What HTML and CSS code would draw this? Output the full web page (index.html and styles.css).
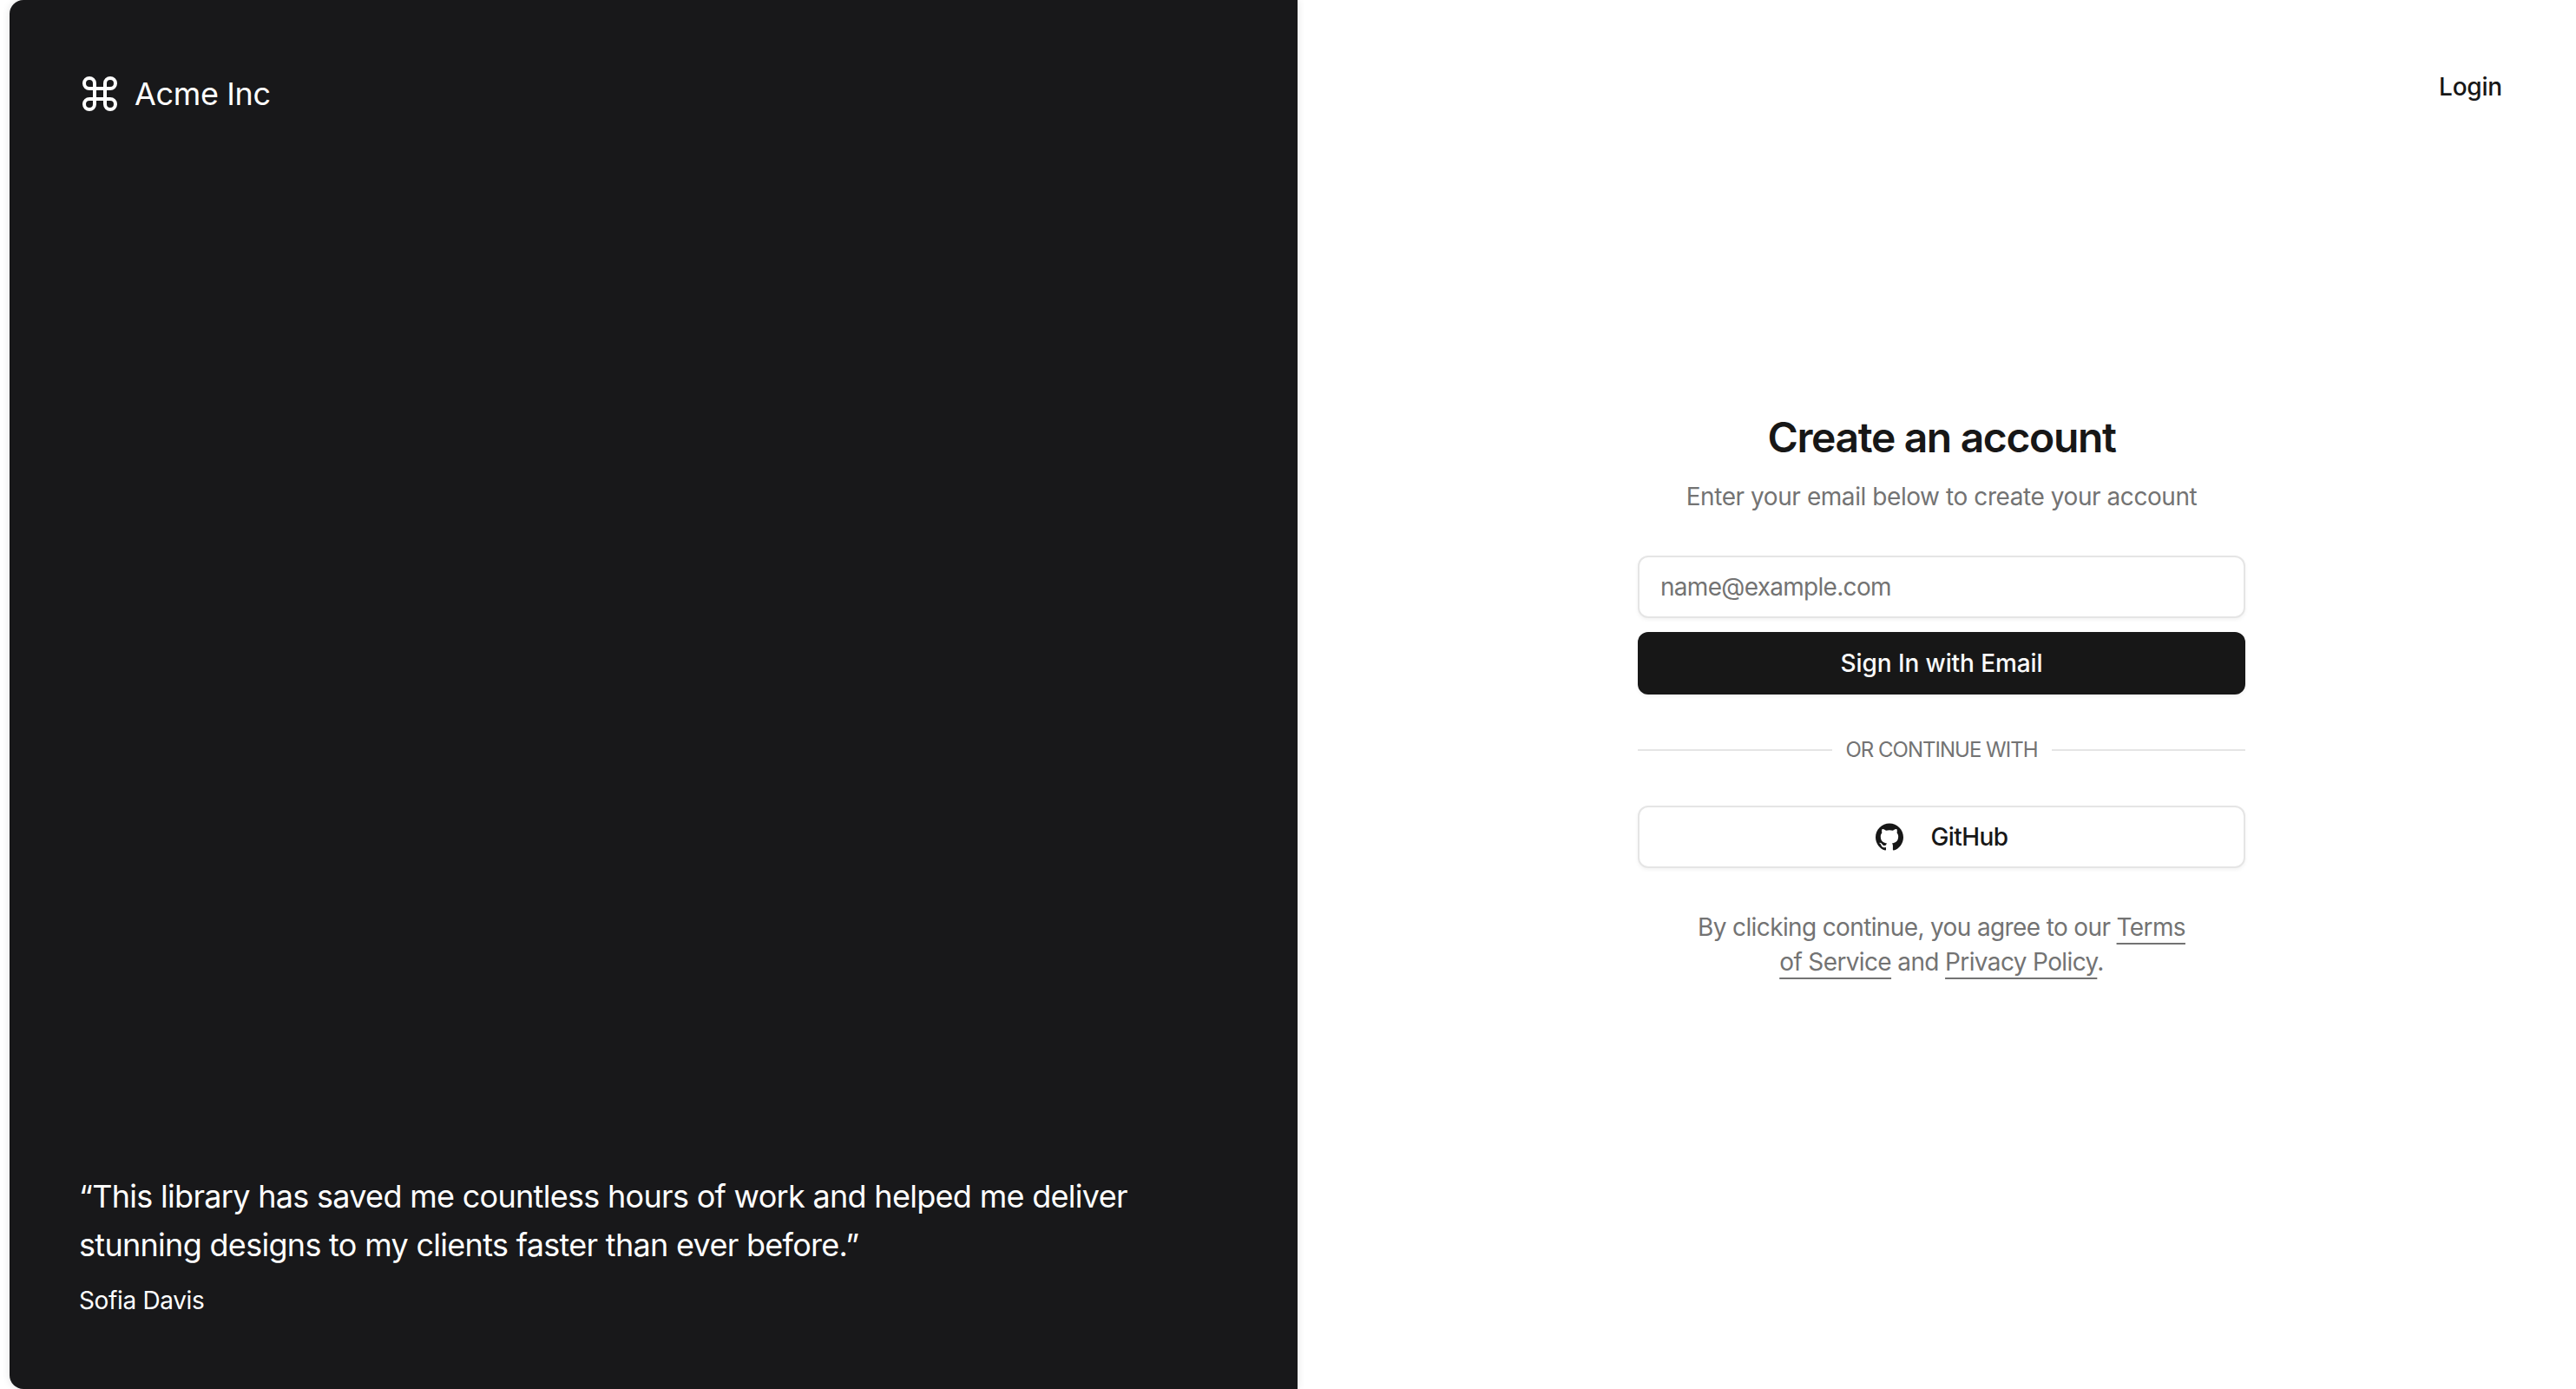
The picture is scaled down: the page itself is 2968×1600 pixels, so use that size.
FILE: index.html
```html
<!DOCTYPE html>
<html lang="en">
<head>
<meta charset="utf-8">
<title>Create an account</title>
<link rel="stylesheet" href="styles.css">
</head>
<body>
<div class="page">
  <aside class="panel">
    <div class="brand">
      <svg class="brand-icon" viewBox="0 0 24 24" fill="none" stroke="currentColor" stroke-width="2" stroke-linecap="round" stroke-linejoin="round"><path d="M15 6v12a3 3 0 1 0 3-3H6a3 3 0 1 0 3 3V6a3 3 0 1 0-3 3h12a3 3 0 1 0-3-3"/></svg>
      <span>Acme Inc</span>
    </div>
    <blockquote class="quote">
      <p class="quote-text">“This library has saved me countless hours of work and helped me deliver stunning designs to my clients faster than ever before.”</p>
      <footer class="quote-author">Sofia Davis</footer>
    </blockquote>
  </aside>
  <main class="content">
    <header class="topbar"><a class="login" href="#">Login</a></header>
    <section class="auth">
      <h1 class="title">Create an account</h1>
      <p class="subtitle">Enter your email below to create your account</p>
      <form class="form">
        <input class="input" type="email" placeholder="name@example.com">
        <button class="btn btn-primary" type="button">Sign In with Email</button>
      </form>
      <div class="divider"><span>OR CONTINUE WITH</span></div>
      <button class="btn btn-outline" type="button">
        <svg class="gh-icon" viewBox="0 0 24 24" fill="currentColor"><path d="M12 .297c-6.63 0-12 5.373-12 12 0 5.303 3.438 9.8 8.205 11.385.6.113.82-.258.82-.577 0-.285-.01-1.04-.015-2.04-3.338.724-4.042-1.61-4.042-1.61C4.422 18.07 3.633 17.7 3.633 17.7c-1.087-.744.084-.729.084-.729 1.205.084 1.838 1.236 1.838 1.236 1.07 1.835 2.809 1.305 3.495.998.108-.776.417-1.305.76-1.605-2.665-.3-5.466-1.332-5.466-5.93 0-1.31.465-2.38 1.235-3.22-.135-.303-.54-1.523.105-3.176 0 0 1.005-.322 3.3 1.23.96-.267 1.98-.399 3-.405 1.02.006 2.04.138 3 .405 2.28-1.552 3.285-1.23 3.285-1.23.645 1.653.24 2.873.12 3.176.765.84 1.23 1.91 1.23 3.22 0 4.61-2.805 5.625-5.475 5.92.42.36.81 1.096.81 2.22 0 1.606-.015 2.896-.015 3.286 0 .315.21.69.825.57C20.565 22.092 24 17.592 24 12.297c0-6.627-5.373-12-12-12"/></svg>
        <span>GitHub</span>
      </button>
      <p class="terms">By clicking continue, you agree to our <a href="#">Terms of Service</a> and <a href="#">Privacy Policy</a>.</p>
    </section>
  </main>
</div>
</body>
</html>
```
FILE: styles.css
```css
* { box-sizing: border-box; }
html, body { margin: 0; height: 100%; background: #fff; }
body { font-family: Inter, "Liberation Sans", sans-serif; color: #171717; overflow: hidden; }
.page { display: flex; height: 1600px; padding-left: 11px; }

.panel {
  width: 1484px;
  flex: none;
  background: #18181a;
  color: #fff;
  border-radius: 16px 0 0 16px;
  box-shadow: 0 0 10px rgba(0, 0, 0, .12);
  padding: 80px 80px 82px;
  display: flex;
  flex-direction: column;
  justify-content: space-between;
}
.brand { display: flex; align-items: center; gap: 16px; font-size: 36px; line-height: 56px; font-weight: 400; letter-spacing: -.35px; }
.brand-icon { width: 48px; height: 48px; flex: none; }
.quote { margin: 0; }
.quote-text { margin: 0 0 16px; font-size: 36px; line-height: 56px; font-weight: 400; letter-spacing: -.7px; }
.quote-author { font-size: 28px; line-height: 40px; font-weight: 400; letter-spacing: -.35px; }

.content { flex: 1; display: grid; padding-left: 11px; }
.topbar { grid-area: 1 / 1; display: flex; justify-content: flex-end; align-items: flex-start; padding: 80px 85px 0 0; }
.login { color: #171717; text-decoration: none; font-size: 28px; line-height: 40px; font-weight: 500; letter-spacing: -.2px; }

.auth { grid-area: 1 / 1; align-self: start; justify-self: center; width: 700px; margin-top: 472px; display: flex; flex-direction: column; align-items: stretch; text-align: center; }
.title { margin: 0; font-size: 48px; line-height: 64px; font-weight: 600; letter-spacing: -1.35px; color: #171717; }
.subtitle { margin: 16px 0 0; font-size: 28px; line-height: 40px; color: #737373; letter-spacing: -.43px; }
.form { display: flex; flex-direction: column; gap: 16px; margin-top: 48px; }
.input {
  display: block; width: 100%; height: 72px; padding: 0 24px;
  border: 2px solid #e5e5e5; border-radius: 12px; background: #fff;
  font: 400 28px Inter, sans-serif; letter-spacing: -.7px; color: #171717; outline: 0;
  box-shadow: 0 2px 4px rgba(0, 0, 0, .05);
}
.input::placeholder { color: #737373; opacity: 1; }
.btn {
  display: flex; align-items: center; justify-content: center; width: 100%; height: 72px;
  border-radius: 12px; font: 500 28px Inter, sans-serif; letter-spacing: -.1px; cursor: pointer;
}
.btn-primary { background: #171717; color: #fafafa; border: 0; box-shadow: 0 2px 4px rgba(0, 0, 0, .05); }
.btn-outline { background: #fff; color: #171717; border: 2px solid #e5e5e5; gap: 32px; letter-spacing: -.6px; box-shadow: 0 2px 4px rgba(0, 0, 0, .05); }
.gh-icon { width: 32px; height: 32px; flex: none; }
.divider { display: flex; align-items: center; gap: 16px; margin: 48px 0; height: 32px; color: #737373; font-size: 24px; line-height: 32px; white-space: nowrap; letter-spacing: -1px; }
.divider::before, .divider::after { content: ""; flex: 1; height: 2px; background: #e5e5e5; }
.terms { margin: 48px auto 0; width: 580px; font-size: 28px; line-height: 40px; color: #737373; letter-spacing: -.63px; }
.terms a { color: inherit; text-decoration: underline; text-underline-offset: 8px; text-decoration-thickness: 2px; }
```
